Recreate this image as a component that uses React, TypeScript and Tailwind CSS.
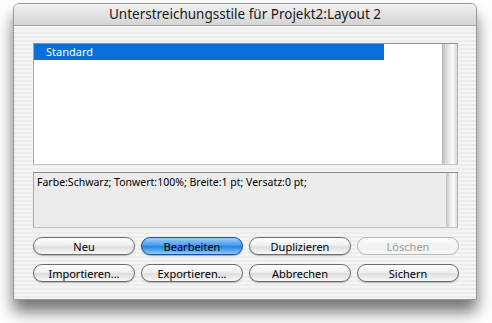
import React from "react";

const buttons = [
	{ label: "Neu" },
	{ label: "Bearbeiten", primary: true },
	{ label: "Duplizieren" },
	{ label: "Löschen", disabled: true },
	{ label: "Importieren..." },
	{ label: "Exportieren..." },
	{ label: "Abbrechen" },
	{ label: "Sichern" },
];

function AquaButton({
	label,
	primary,
	disabled,
}: {
	label: string;
	primary?: boolean;
	disabled?: boolean;
}) {
	if (primary) {
		return (
			<button className="flex h-[18px] items-center justify-center rounded-full border border-[#1d4f9c] bg-[linear-gradient(to_bottom,#9fcdf8_0%,#4f9ded_45%,#2583e3_55%,#8ad0ff_100%)] text-[11px] leading-none text-black shadow-[0_1px_1px_rgba(0,0,0,0.3)]">
				{label}
			</button>
		);
	}
	return (
		<button
			className={
				disabled
					? "flex h-[18px] items-center justify-center rounded-full border border-[#b9b9b9] bg-[linear-gradient(to_bottom,#fbfbfb_0%,#f1f1f1_50%,#f6f6f6_100%)] text-[11px] leading-none text-[#9c9c9c]"
					: "flex h-[18px] items-center justify-center rounded-full border border-[#6e6e6e] bg-[linear-gradient(to_bottom,#ffffff_0%,#f0f0f0_45%,#dedede_55%,#f8f8f8_100%)] text-[11px] leading-none text-black shadow-[0_1px_1px_rgba(0,0,0,0.25)]"
			}
		>
			{label}
		</button>
	);
}

export default function App() {
	return (
		<div className="h-[323px] w-[492px] overflow-hidden bg-white pl-[13px] pt-[3px] font-['Noto_Sans',sans-serif]">
			<div className="flex h-[297px] w-[464px] flex-col overflow-hidden rounded-t-[6px] border border-[#9a9a9a] bg-[repeating-linear-gradient(to_bottom,#ededed_0px,#ededed_2px,#f4f4f4_2px,#f4f4f4_4px)] shadow-[0_12px_16px_rgba(0,0,0,0.55)]">
				<div className="flex h-[22px] shrink-0 items-center justify-center border-b border-[#a8a8a8] bg-[linear-gradient(to_bottom,#f2f2f2,#d4d4d4)] text-[13.5px] text-[#1a1a1a]">
					Unterstreichungsstile für Projekt2:Layout 2
				</div>
				<div className="flex flex-col pl-[19px] pt-[17px]">
					<div className="flex h-[122px] w-[425px] border border-t-[#8c8c8c] border-r-[#b5b5b5] border-b-[#c4c4c4] border-l-[#a8a8a8] bg-white">
						<div className="flex-1">
							<div className="flex h-[16px] w-[350px] items-center bg-[#0a6fd8] pl-[12px] text-[11px] text-white">
								Standard
							</div>
						</div>
						<div className="w-[15px] bg-[linear-gradient(to_right,#b9b9b9,#e6e6e6_40%,#fbfbfb_70%,#d8d8d8)]" />
					</div>
					<div className="mt-[7px] flex h-[56px] w-[425px] border border-t-[#8c8c8c] border-r-[#b5b5b5] border-b-[#c4c4c4] border-l-[#a8a8a8] bg-[#ececec]">
						<div className="flex-1 pl-[3px] pt-[2px] text-[10.5px] text-black">
							Farbe:Schwarz; Tonwert:100%; Breite:1 pt; Versatz:0 pt;
						</div>
						<div className="w-[11px] bg-[linear-gradient(to_right,#c4c4c4,#ececec_40%,#fbfbfb_70%,#dadada)]" />
					</div>
					<div className="mt-[9px] grid w-[426px] grid-cols-4 gap-x-[6px] gap-y-[9px]">
						{buttons.map(b => (
							<AquaButton
								key={b.label}
								label={b.label}
								primary={b.primary}
								disabled={b.disabled}
							/>
						))}
					</div>
				</div>
			</div>
		</div>
	);
}
